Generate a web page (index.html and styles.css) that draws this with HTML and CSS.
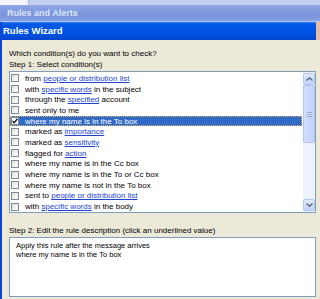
FILE: index.html
```html
<!DOCTYPE html>
<html lang="en">
<head>
  <meta charset="UTF-8">
  <title>Rules Wizard</title>
  <link rel="stylesheet" href="styles.css">
</head>
<body>
  <div class="behind">
    <div class="behind-top"><span class="behind-white"></span></div>
    <div class="behind-title">Rules and Alerts</div>
  </div>

  <div class="wizard">
    <div class="wizard-title">
      <span>Rules Wizard</span>
      <span class="close-edge"></span>
    </div>
    <div class="wizard-body">
      <p class="label">Which condition(s) do you want to check?</p>
      <p class="label">Step 1: Select condition(s)</p>

      <div class="listbox">
        <ul class="conditions">
          <li><span class="check"></span>from&nbsp;<a>people or distribution list</a></li>
          <li><span class="check"></span>with&nbsp;<a>specific words</a>&nbsp;in the subject</li>
          <li><span class="check"></span>through the&nbsp;<a>specified</a>&nbsp;account</li>
          <li><span class="check"></span>sent only to me</li>
          <li class="selected">
            <span class="check">
              <svg width="6" height="6" viewBox="0 0 6 6"><polyline points="0.5,3 2.2,4.8 5.5,0.8" fill="none" stroke="#1a1a1a" stroke-width="1.4"/></svg>
            </span>where my name is in the To box
          </li>
          <li><span class="check"></span>marked as&nbsp;<a>importance</a></li>
          <li><span class="check"></span>marked as&nbsp;<a>sensitivity</a></li>
          <li><span class="check"></span>flagged for&nbsp;<a>action</a></li>
          <li><span class="check"></span>where my name is in the Cc box</li>
          <li><span class="check"></span>where my name is in the To or Cc box</li>
          <li><span class="check"></span>where my name is not in the To box</li>
          <li><span class="check"></span>sent to&nbsp;<a>people or distribution list</a></li>
          <li><span class="check"></span>with&nbsp;<a>specific words</a>&nbsp;in the body</li>
        </ul>
        <div class="scrollbar">
          <div class="sb-btn">
            <svg width="7" height="4" viewBox="0 0 7 4"><polyline points="0.5,3.5 3.5,0.8 6.5,3.5" fill="none" stroke="#4d6185" stroke-width="1.3"/></svg>
          </div>
          <div class="sb-thumb"><span class="grip"></span></div>
          <div class="sb-track"></div>
          <div class="sb-btn">
            <svg width="7" height="4" viewBox="0 0 7 4"><polyline points="0.5,0.5 3.5,3.2 6.5,0.5" fill="none" stroke="#4d6185" stroke-width="1.3"/></svg>
          </div>
        </div>
      </div>

      <p class="label step2">Step 2: Edit the rule description (click an underlined value)</p>
      <div class="desc">
        Apply this rule after the message arrives<br>
        where my name is in the To box
      </div>
    </div>
  </div>
</body>
</html>
```

FILE: styles.css
```css
body {
  margin: 0;
  width: 320px;
  height: 299px;
  overflow: hidden;
  background-color: #e3e6ee;
  font-family: "Liberation Sans", Arial, sans-serif;
  color: #000;
}
.behind-top {
  height: 5px;
  display: flex;
  background-color: #c2cfee;
}
.behind-white {
  width: 28px;
  background-color: #f3f5fa;
  border-right: 1px solid #a9b6d2;
}
.behind-title {
  height: 16px;
  padding-left: 7px;
  background: linear-gradient(#8fa7e6, #7a94dc 60%, #86a0e6);
  border-bottom: 1px solid #b6c6f0;
  color: #dce5f8;
  font-size: 9px;
  font-weight: bold;
  line-height: 16px;
}
.wizard {
  width: 320px;
  box-sizing: border-box;
  border-left: 2px solid #0a46d6;
}
.wizard-title {
  height: 18px;
  display: flex;
  padding-left: 1px;
  background: linear-gradient(#3a7cf0 0, #0058e6 2px, #0050e0 13px, #0044cc 18px);
  color: #fff;
  font-size: 9.5px;
  font-weight: bold;
  line-height: 18px;
}
.close-edge {
  margin-left: auto;
  width: 4px;
  background-color: #e6bcaa;
}
.wizard-body {
  height: 259px;
  padding: 8px 4px 0 7px;
  background-color: #ece9d8;
}
.label {
  margin: 0;
  font-size: 8px;
  line-height: 11px;
}
.listbox {
  display: flex;
  height: 142px;
  margin-top: 1px;
  box-sizing: border-box;
  border: 1px solid #7f9db9;
  background-color: #fff;
}
.conditions {
  flex: 1;
  list-style: none;
  margin: 0 1px 0 0;
  padding: 1px 0 0 0;
  overflow: hidden;
}
.conditions li {
  display: flex;
  align-items: center;
  height: 10.7px;
  box-sizing: border-box;
  font-size: 8px;
  white-space: nowrap;
}
.conditions a {
  color: #2244cc;
  text-decoration: underline;
}
.conditions li.selected {
  background-color: #316ac5;
  color: #fff;
  outline: 1px dotted #d9b36a;
  outline-offset: -1px;
}
.check {
  display: flex;
  align-items: center;
  justify-content: center;
  width: 8px;
  height: 8px;
  box-sizing: border-box;
  margin: 0 6px 0 1px;
  border: 1px solid #7d8a96;
  background: linear-gradient(135deg, #e2e2dc, #fff);
}
.selected .check {
  background: #fff;
}
.scrollbar {
  display: flex;
  flex-direction: column;
  width: 12px;
  padding: 1px 0;
  background-color: #eef2fc;
}
.sb-btn {
  display: flex;
  align-items: center;
  justify-content: center;
  height: 10px;
  border: 1px solid #b5c7f1;
  border-radius: 2px;
  background: linear-gradient(#e2eafd, #c3d3f8);
}
.sb-thumb {
  display: flex;
  align-items: center;
  justify-content: center;
  height: 56px;
  border: 1px solid #b2c4ef;
  border-radius: 2px;
  background: linear-gradient(to right, #d3defc, #c2d1f8);
}
.grip {
  width: 5px;
  height: 5px;
  background: repeating-linear-gradient(#8fa4d8 0, #8fa4d8 1px, #e8eefc 1px, #e8eefc 2px);
}
.sb-track {
  flex: 1;
}
.step2 {
  margin-top: 12px;
}
.desc {
  height: 60px;
  margin-top: 1px;
  box-sizing: border-box;
  padding: 4px 6px;
  border: 1px solid #7f9db9;
  background-color: #fff;
  font-size: 7.5px;
  line-height: 8.5px;
}
```
